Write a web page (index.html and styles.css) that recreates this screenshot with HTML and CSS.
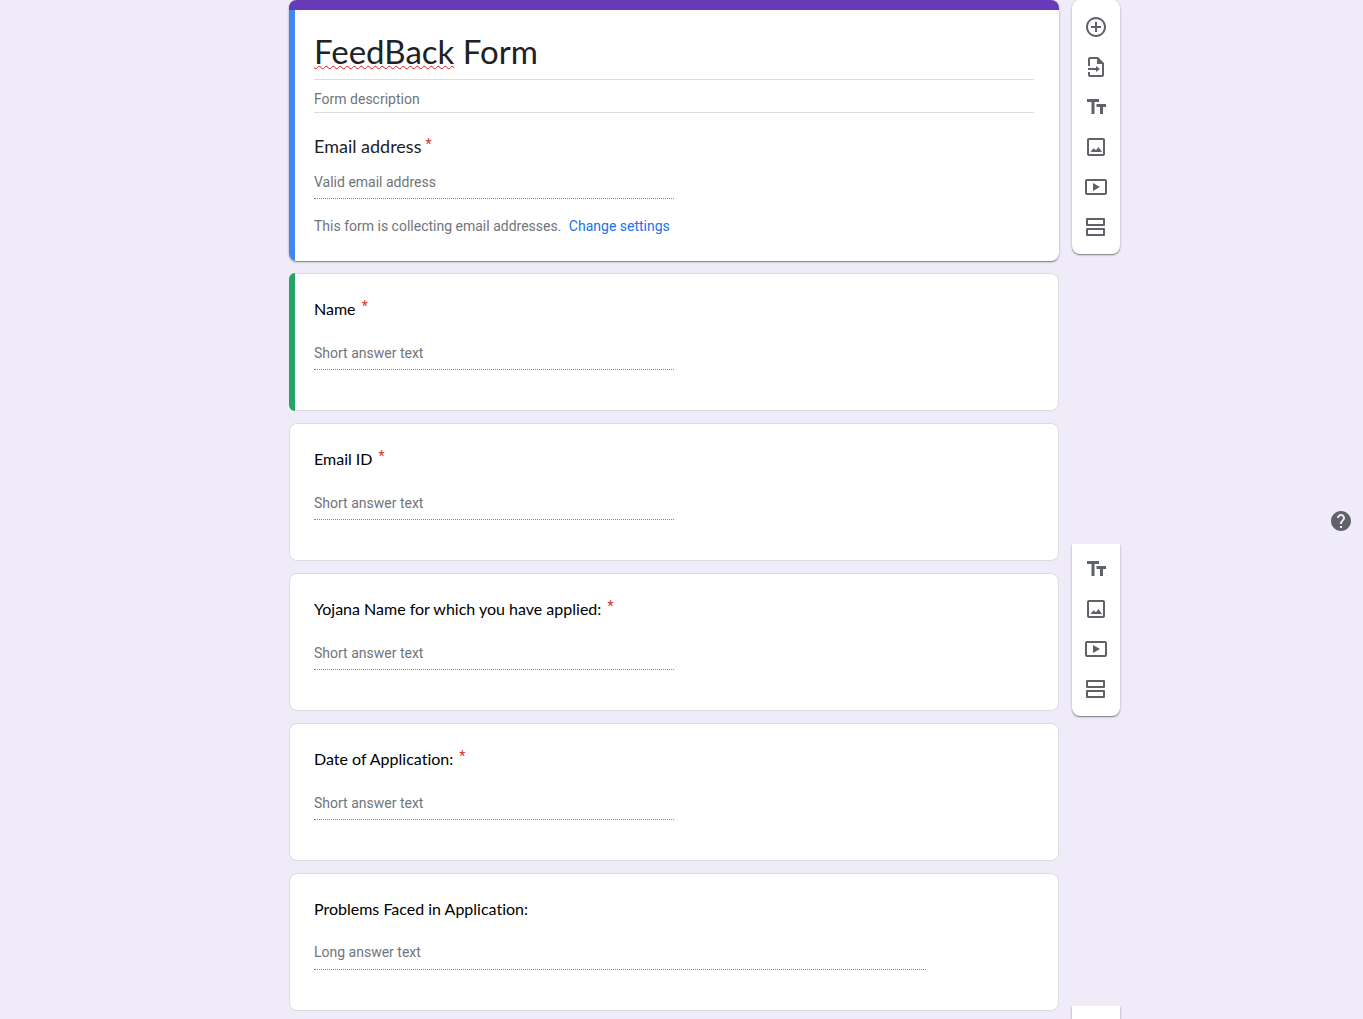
FILE: index.html
```html
<!DOCTYPE html>
<html lang="en">
<head>
<meta charset="utf-8">
<meta name="viewport" content="width=device-width, initial-scale=1">
<title>FeedBack Form</title>
<link rel="stylesheet" href="styles.css">
</head>
<body>
<svg class="sprite" aria-hidden="true">
  <symbol id="i-add" viewBox="0 0 24 24"><path d="M13 7h-2v4H7v2h4v4h2v-4h4v-2h-4V7zm-1-5C6.48 2 2 6.48 2 12s4.48 10 10 10 10-4.480 10-10S17.520 2 12 2zm0 18c-4.410 0-8-3.590-8-8s3.590-8 8-8 8 3.590 8 8-3.590 8-8 8z"/></symbol>
  <symbol id="i-import" viewBox="0 0 24 24"><path d="M14 2H6a2 2 0 0 0-2 2v7h2V4h7v5h5v11H6v-3H4v3a2 2 0 0 0 2 2h12a2 2 0 0 0 2-2V8l-6-6zM12 17l4-3-4-3v2H4v2h8v2z"/></symbol>
  <symbol id="i-text" viewBox="0 0 24 24"><path d="M3 4h12v3h-4.500v12h-3V7H3V4zM12.500 9H22v3h-3v7h-3v-7h-3.500V9z"/></symbol>
  <symbol id="i-image" viewBox="0 0 24 24"><path d="M19 5v14H5V5h14m0-2H5c-1.100 0-2 .9-2 2v14c0 1.100.9 2 2 2h14c1.100 0 2-.9 2-2V5c0-1.100-.9-2-2-2zM14.500 12l-2.500 3.200-2.500-2L6.500 17h11.500L14.500 12z"/></symbol>
  <symbol id="i-video" viewBox="0 0 24 24"><path d="M21 4H3c-1.100 0-2 .9-2 2v12c0 1.100.9 2 2 2h18c1.100 0 2-.9 2-2V6c0-1.100-.9-2-2-2zm0 14H3V6h18v12zM9 8v8l7-4-7-4z"/></symbol>
  <symbol id="i-section" viewBox="0 0 24 24"><path d="M3 3h17a1 1 0 0 1 1 1v6a1 1 0 0 1-1 1H3a1 1 0 0 1-1-1V4a1 1 0 0 1 1-1zm1 2v4h15V5H4zM3 13h17a1 1 0 0 1 1 1v6a1 1 0 0 1-1 1H3a1 1 0 0 1-1-1v-6a1 1 0 0 1 1-1zm1 2v4h15v-4H4z"/></symbol>
  <symbol id="i-help" viewBox="0 0 24 24"><path d="M12 2C6.480 2 2 6.480 2 12s4.480 10 10 10 10-4.480 10-10S17.520 2 12 2zm1 17h-2v-2h2v2zm2.070-7.750l-.9.920C13.450 12.900 13 13.500 13 15h-2v-.5c0-1.100.450-2.100 1.170-2.830l1.240-1.260c.370-.360.590-.860.590-1.410 0-1.100-.9-2-2-2s-2 .9-2 2H8c0-2.210 1.790-4 4-4s4 1.790 4 4c0 .880-.360 1.680-.930 2.250z"/></symbol>
</svg>
<div class="page">
  <main class="form">
    <section class="card header">
      <h1 class="title"><span class="misspelled">FeedBack</span> Form</h1>
      <input class="description" type="text" placeholder="Form description" aria-label="Form description">
      <label class="email-label" for="email">Email address<span class="required">*</span></label>
      <input class="answer" id="email" type="email" placeholder="Valid email address">
      <p class="note">This form is collecting email addresses. <a href="#settings">Change settings</a></p>
    </section>
    <section class="card question selected">
      <label class="label" for="q1">Name <span class="required">*</span></label>
      <input class="answer" id="q1" type="text" placeholder="Short answer text">
    </section>
    <section class="card question">
      <label class="label" for="q2">Email ID <span class="required">*</span></label>
      <input class="answer" id="q2" type="text" placeholder="Short answer text">
    </section>
    <section class="card question">
      <label class="label" for="q3">Yojana Name for which you have applied: <span class="required">*</span></label>
      <input class="answer" id="q3" type="text" placeholder="Short answer text">
    </section>
    <section class="card question">
      <label class="label" for="q4">Date of Application: <span class="required">*</span></label>
      <input class="answer" id="q4" type="text" placeholder="Short answer text">
    </section>
    <section class="card question">
      <label class="label" for="q5">Problems Faced in Application:</label>
      <textarea class="answer long" id="q5" rows="1" placeholder="Long answer text"></textarea>
    </section>
  </main>
  <aside class="tools">
    <div class="toolbar">
      <button type="button" aria-label="Add question"><svg><use href="#i-add"/></svg></button>
      <button type="button" aria-label="Import questions"><svg><use href="#i-import"/></svg></button>
      <button type="button" aria-label="Add title and description"><svg><use href="#i-text"/></svg></button>
      <button type="button" aria-label="Add image"><svg><use href="#i-image"/></svg></button>
      <button type="button" aria-label="Add video"><svg><use href="#i-video"/></svg></button>
      <button type="button" aria-label="Add section"><svg><use href="#i-section"/></svg></button>
    </div>
    <div class="toolbar continued">
      <button type="button" aria-label="Add title and description"><svg><use href="#i-text"/></svg></button>
      <button type="button" aria-label="Add image"><svg><use href="#i-image"/></svg></button>
      <button type="button" aria-label="Add video"><svg><use href="#i-video"/></svg></button>
      <button type="button" aria-label="Add section"><svg><use href="#i-section"/></svg></button>
    </div>
    <div class="toolbar rest"></div>
  </aside>
</div>
<button class="help" type="button" aria-label="Help"><svg><use href="#i-help"/></svg></button>
</body>
</html>
```
FILE: styles.css
```css
* {
  box-sizing: border-box;
}

body {
  margin: 0;
  background: #efebf8;
  color: #202124;
  font-family: Roboto, "Liberation Sans", sans-serif;
  font-size: 14px;
  line-height: 20px;
}

button {
  padding: 0;
  border: 0;
  background: none;
  cursor: pointer;
}

svg {
  display: block;
  width: 24px;
  height: 24px;
  fill: #5f6368;
}

.sprite {
  display: none;
}

.page {
  display: grid;
  grid-template-columns: 1fr minmax(0, 770px) 1fr;
  column-gap: 13px;
  min-height: 100vh;
  padding-right: 15px;
}

.form {
  grid-column: 2;
  display: flex;
  flex-direction: column;
  gap: 12px;
  padding-bottom: 8px;
}

.card {
  position: relative;
  display: flex;
  flex-direction: column;
  align-items: flex-start;
  background: #fff;
  border: 1px solid #dadce0;
  border-radius: 8px;
}

.header {
  padding: 31px 25px 25px;
  border: 0;
  box-shadow: 0 1px 1px rgba(0, 0, 0, 0.35), 0 1px 3px rgba(0, 0, 0, 0.2);
  overflow: hidden;
}

.header::before,
.selected::before {
  content: "";
  position: absolute;
  inset: 0 auto 0 0;
  width: 6px;
  background: #4285f4;
}

.header::after {
  content: "";
  position: absolute;
  inset: 0 0 auto;
  height: 10px;
  background: #673ab7;
}

.selected::before {
  inset: -1px auto -1px -1px;
  border-radius: 8px 0 0 8px;
  background: #22a565;
}

.title {
  width: 100%;
  margin: 0;
  padding-bottom: 8px;
  border-bottom: 1px solid #dadce0;
  font: 400 33px/40px Lato, "Open Sans", sans-serif;
}

.misspelled {
  text-decoration: underline wavy #e01b1b 1px;
  text-underline-offset: 1px;
  text-decoration-skip-ink: none;
}

input,
textarea {
  display: block;
  border: 0;
  border-radius: 0;
  padding: 0;
  background: none;
  color: #202124;
  font: inherit;
  outline: 0;
  resize: none;
}

::placeholder {
  color: #70757a;
  opacity: 1;
}

.description {
  width: 100%;
  height: 33px;
  padding-top: 6px;
  border-bottom: 1px solid #dadce0;
}

.label,
.email-label {
  font: 400 16px/24px Lato, "Open Sans", sans-serif;
  font-variant-ligatures: none;
  color: #000;
}

.email-label {
  margin: 21px 0 13px;
  font-size: 18px;
  color: #202124;
}

.required {
  padding-left: 4px;
  color: #d93025;
  font: 14px/14px Roboto, sans-serif;
  vertical-align: 4px;
}

.label .required {
  padding-left: 2px;
}

.answer {
  width: 360px;
  max-width: 100%;
  height: 28px;
  padding-bottom: 6px;
  border-bottom: 1px dotted #80868b;
}

.long {
  width: 612px;
  overflow: hidden;
}

.note {
  margin: 17px 0 0;
  color: #70757a;
}

.note a {
  padding-left: 4px;
  color: #1a73e8;
  text-decoration: none;
}

.question {
  padding: 23px 24px 40px;
}

.question .answer {
  margin-top: 21px;
}

.tools {
  display: flex;
  flex-direction: column;
  gap: 290px;
  width: 48px;
}

.toolbar {
  padding: 7px 0;
  border-radius: 8px;
  background: #fff;
  box-shadow: 0 1px 1px rgba(0, 0, 0, 0.35), 0 1px 3px rgba(0, 0, 0, 0.2);
}

.toolbar button {
  display: grid;
  place-items: center;
  width: 48px;
  height: 40px;
}

.continued,
.rest {
  padding-top: 5px;
  border-radius: 0 0 8px 8px;
  clip-path: inset(0 -4px -4px);
}

.rest {
  flex: 1;
  border-radius: 0;
}

.help {
  position: fixed;
  top: 509px;
  right: 10px;
}
```
